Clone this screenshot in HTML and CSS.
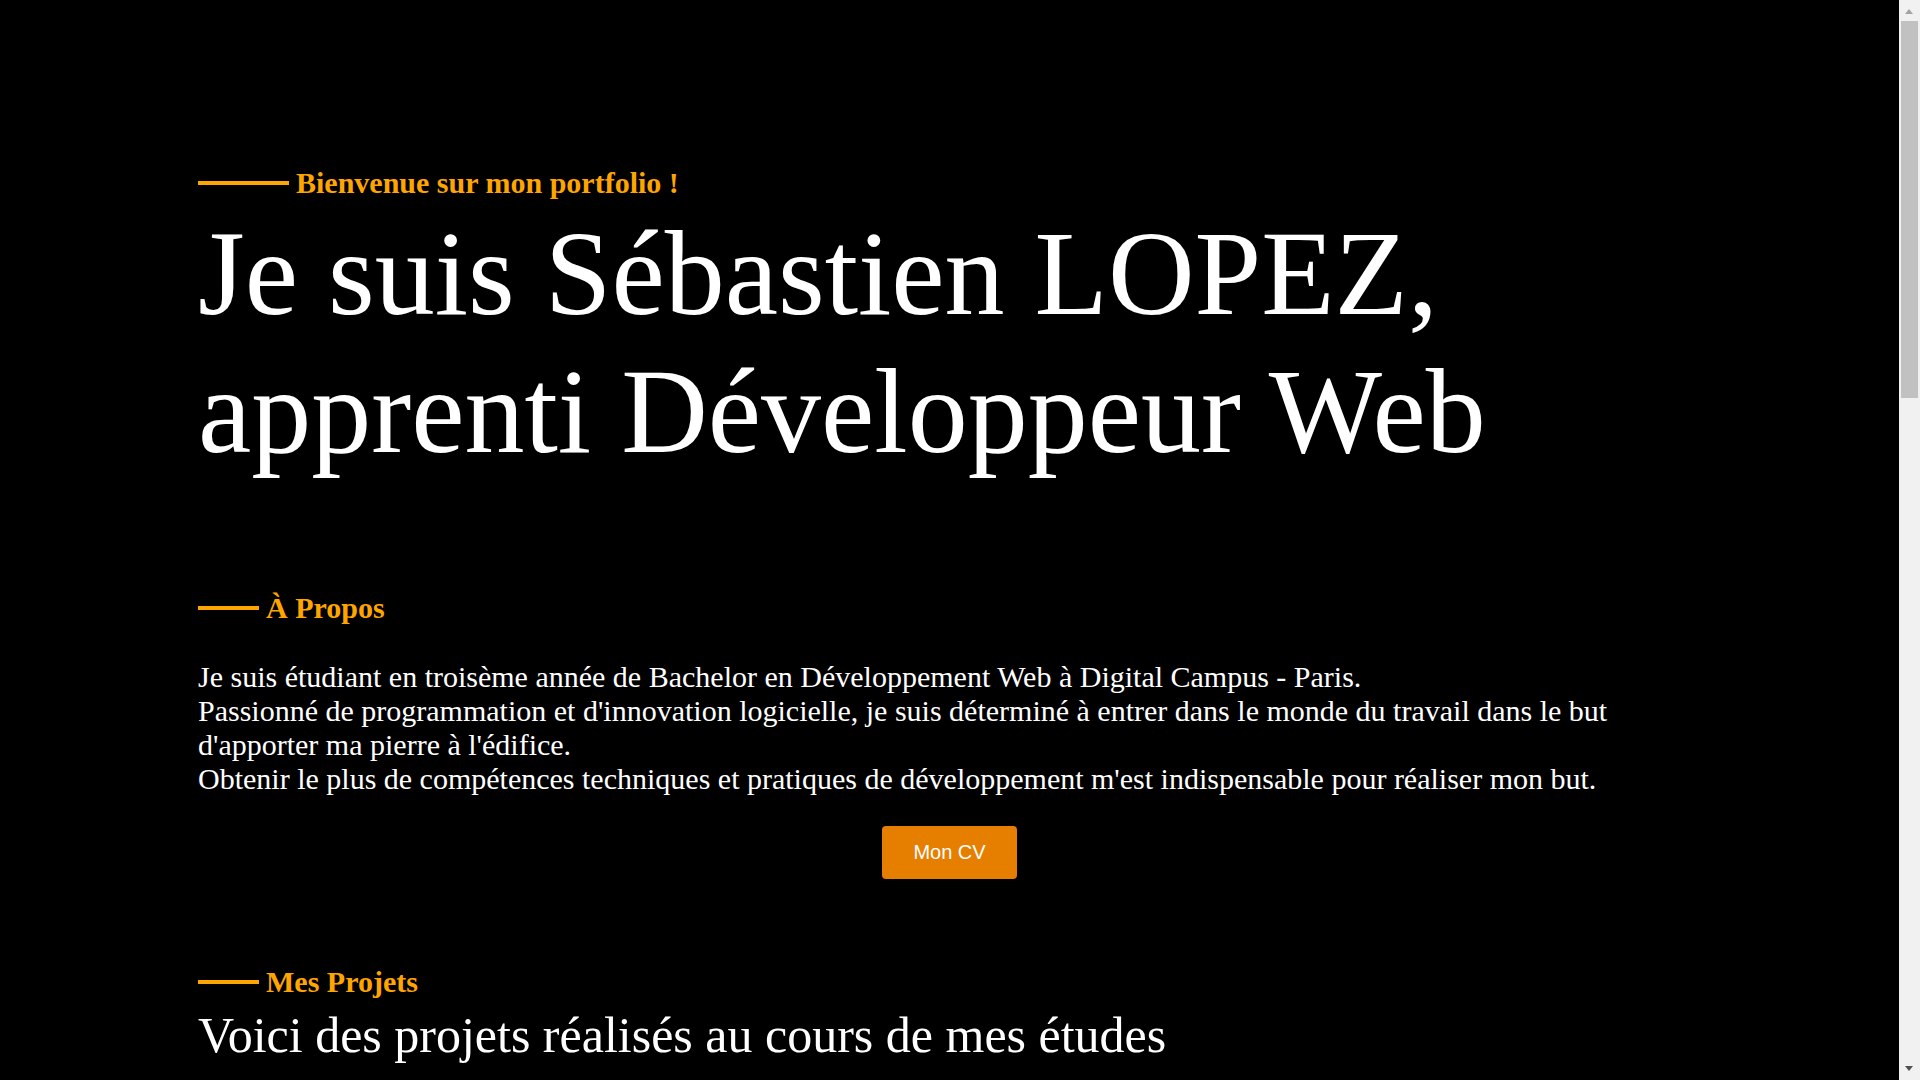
FILE: index.html
```html
<!DOCTYPE html>
<html lang="fr">
<head>
<meta charset="utf-8">
<title>Sébastien LOPEZ - Portfolio</title>
<link rel="stylesheet" href="styles.css">
</head>
<body>
<main class="page">
  <section class="hero">
    <p class="label label--wide"><span class="label__bar"></span><span>Bienvenue sur mon portfolio !</span></p>
    <h1 class="hero__title">Je suis Sébastien LOPEZ, apprenti Développeur Web</h1>
  </section>

  <section class="about">
    <h2 class="label"><span class="label__bar"></span><span>À Propos</span></h2>
    <p class="about__text">Je suis étudiant en troisème année de Bachelor en Développement Web à Digital Campus - Paris.<br>Passionné de programmation et d'innovation logicielle, je suis déterminé à entrer dans le monde du travail dans le but d'apporter ma pierre à l'édifice.<br>Obtenir le plus de compétences techniques et pratiques de développement m'est indispensable pour réaliser mon but.</p>
    <div class="about__actions"><a class="btn" href="#">Mon CV</a></div>
  </section>

  <section class="projects">
    <h2 class="label"><span class="label__bar"></span><span>Mes Projets</span></h2>
    <h3 class="projects__title">Voici des projets réalisés au cours de mes études</h3>
  </section>
</main>
<div class="scrollbar" aria-hidden="true">
  <span class="scrollbar__up"></span>
  <span class="scrollbar__thumb"></span>
  <span class="scrollbar__down"></span>
</div>
</body>
</html>
```
FILE: styles.css
```css
html, body {
  margin: 0;
  padding: 0;
}
html {
  scrollbar-width: none;
}
body {
  background: #000;
  color: #fff;
  font-family: "Liberation Serif", "Times New Roman", serif;
}
.page {
  padding: 166px 198px 0;
  margin-right: 21px;
}
.label {
  display: flex;
  align-items: center;
  gap: 7px;
  margin: 0;
  font-size: 30px;
  font-weight: bold;
  color: #ffa500;
  line-height: normal;
}
.label__bar {
  display: block;
  width: 61px;
  height: 4px;
  background: #ffa500;
}
.label--wide .label__bar {
  width: 91px;
}
.hero__title {
  margin: 5px 0 0;
  font-size: 120px;
  font-weight: normal;
  line-height: normal;
}
.about {
  margin-top: 110px;
}
.about__text {
  margin: 35px 0 0;
  font-size: 30px;
  line-height: normal;
}
.about__actions {
  display: flex;
  justify-content: center;
  margin-top: 30px;
}
.btn {
  display: inline-block;
  padding: 15px 31px;
  background: #e67e00;
  color: #fff;
  border-radius: 4px;
  font-family: "Liberation Sans", Arial, sans-serif;
  font-size: 20px;
  line-height: 23px;
  text-decoration: none;
}
.projects {
  margin-top: 86px;
  min-height: 1900px;
}
.projects__title {
  margin: 7px 0 0;
  font-size: 50px;
  font-weight: normal;
  line-height: normal;
}

/* browser scrollbar as seen in the capture */
.scrollbar {
  position: fixed;
  top: 0;
  right: 0;
  width: 21px;
  height: 100vh;
  background: #f1f1f1;
}
.scrollbar__up,
.scrollbar__down {
  position: absolute;
  left: 6px;
  width: 0;
  height: 0;
  border-left: 4.5px solid transparent;
  border-right: 4.5px solid transparent;
}
.scrollbar__up {
  top: 9px;
  border-bottom: 5px solid #a3a3a3;
}
.scrollbar__down {
  bottom: 9px;
  border-top: 5px solid #505050;
}
.scrollbar__thumb {
  position: absolute;
  top: 21px;
  left: 2px;
  width: 17px;
  height: 377px;
  background: #c1c1c1;
}
```
